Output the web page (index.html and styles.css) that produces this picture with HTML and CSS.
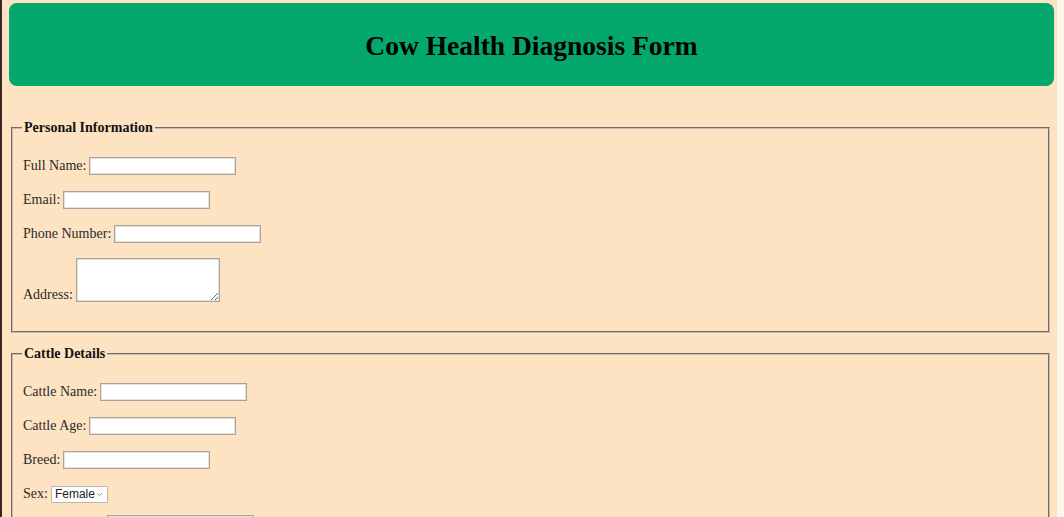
FILE: index.html
```html
<!DOCTYPE html>
<html lang="en">
<head>
<meta charset="utf-8">
<title>Cow Health Diagnosis Form</title>
<link rel="stylesheet" href="styles.css">
</head>
<body>
<div class="page">
  <header class="banner">
    <h1 class="title">Cow Health Diagnosis Form</h1>
  </header>
  <form class="form">
    <fieldset class="group group-personal">
      <legend class="legend">Personal Information</legend>
      <div class="row"><label class="label" for="fullname">Full Name:</label><input class="field" id="fullname" type="text"></div>
      <div class="row"><label class="label" for="email">Email:</label><input class="field" id="email" type="email"></div>
      <div class="row"><label class="label" for="phone">Phone Number:</label><input class="field" id="phone" type="tel"></div>
      <div class="row row-area"><label class="label" for="address">Address:</label><textarea class="area" id="address"></textarea></div>
    </fieldset>
    <fieldset class="group group-cattle">
      <legend class="legend">Cattle Details</legend>
      <div class="row"><label class="label" for="cname">Cattle Name:</label><input class="field" id="cname" type="text"></div>
      <div class="row"><label class="label" for="cage">Cattle Age:</label><input class="field" id="cage" type="text"></div>
      <div class="row"><label class="label" for="breed">Breed:</label><input class="field" id="breed" type="text"></div>
      <div class="row row-select"><label class="label" for="sex">Sex:</label><span class="select-wrap"><select class="choice" id="sex"><option>Female</option><option>Male</option></select><svg class="chevron" width="7" height="5" viewBox="0 0 7 5" aria-hidden="true"><path d="M1 1.2 L3.5 3.6 L6 1.2" fill="none" stroke="#9a9a9a" stroke-width="1"/></svg></span></div>
      <div class="row row-last"><label class="label" for="weight">Cattle Weight:</label><input class="field" id="weight" type="text"></div>
    </fieldset>
  </form>
</div>
<div class="scrollbar"></div>
</body>
</html>
```
FILE: styles.css
```css
html, body {
  height: 100%;
}
body {
  margin: 0;
  display: flex;
  background: #fee3c3;
  border-left: 2px solid #3c2225;
  font-family: "Liberation Serif", "Times New Roman", serif;
  font-size: 14px;
  color: #222;
  overflow: hidden;
}
.page {
  flex: 1;
  padding: 3px 3px 0 7px;
  min-width: 0;
}
.scrollbar {
  width: 7px;
  background: #fdf4ec;
  flex: none;
}
.banner {
  background: #04a86d;
  border-radius: 8px;
  height: 83px;
  display: flex;
  align-items: center;
  justify-content: center;
}
.title {
  margin: 0;
  font-size: 27.5px;
  font-weight: bold;
  color: #000;
  position: relative;
  top: 1px;
}
.form {
  display: flex;
  flex-direction: column;
}
.group {
  margin: 34px 4px 0 2px;
  padding: 21px 10px 29px;
  border: 2px groove #c4bcb4;
}
.group-cattle {
  margin-top: 13px;
}
.legend {
  font-weight: bold;
  padding: 0 2px;
  margin-left: -1px;
  color: #111;
}
.row {
  display: flex;
  align-items: center;
  gap: 3px;
  height: 18px;
  margin-bottom: 16px;
}
.row:last-child {
  margin-bottom: 0;
}
.row-area {
  height: 43px;
  align-items: flex-end;
}
.row-select {
  margin-bottom: 12px;
}
.label {
  line-height: 16px;
  color: #2a2a2a;
}
.row-area .label {
  position: relative;
  top: 1px;
}
.field {
  box-sizing: border-box;
  width: 147px;
  height: 18px;
  margin: 0;
  border: 1px solid #aaa39c;
  box-shadow: inset 0 0 0 1px #e6e0da;
  background: #fff;
  padding: 0 3px;
}
.area {
  box-sizing: border-box;
  width: 144px;
  height: 44px;
  margin: 0;
  border: 1px solid #aaa39c;
  box-shadow: inset 0 0 0 1px #e6e0da;
  background: #fff;
}
.select-wrap {
  position: relative;
  display: inline-flex;
}
.choice {
  box-sizing: border-box;
  width: 57px;
  height: 17px;
  margin: 0;
  -webkit-appearance: none;
  appearance: none;
  font-family: "Liberation Sans", Arial, sans-serif;
  font-size: 12px;
  line-height: 15px;
  border: 1px solid #bdb6b0;
  border-radius: 1px;
  background: #fff;
  color: #222;
  padding: 0 0 0 3px;
}
.chevron {
  position: absolute;
  right: 5px;
  top: 6px;
  pointer-events: none;
}
```
